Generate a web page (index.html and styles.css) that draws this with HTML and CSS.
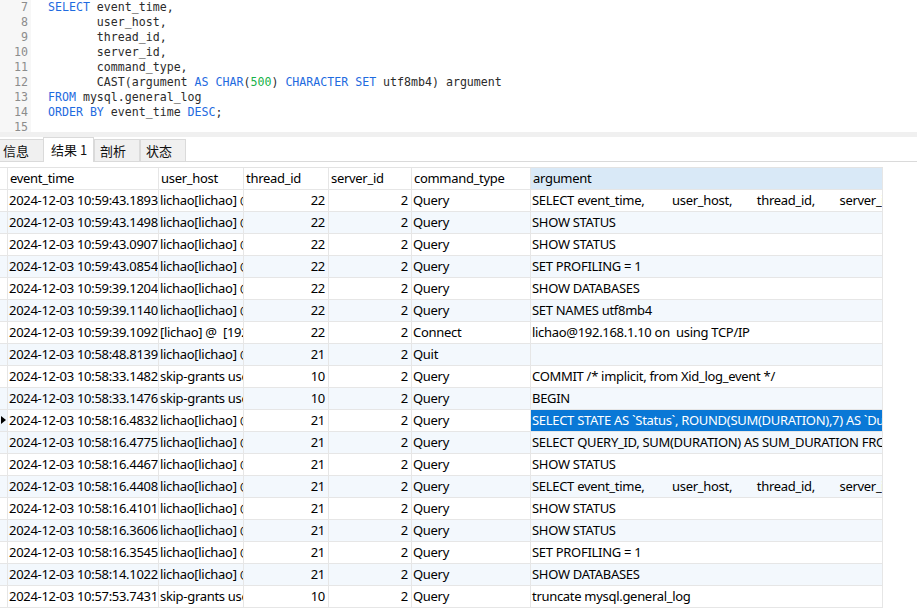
FILE: index.html
```html
<!DOCTYPE html>
<html>
<head>
<meta charset="utf-8">
<link rel="stylesheet" href="styles.css">
</head>
<body>
<div class="editor">
  <div class="gutter">
    <div>7</div><div>8</div><div>9</div><div>10</div><div>11</div><div>12</div><div>13</div><div>14</div><div>15</div>
  </div>
<pre class="code"><span class="kw">SELECT</span> event_time,
       user_host,
       thread_id,
       server_id,
       command_type,
       CAST(argument <span class="kw">AS</span> <span class="kw">CHAR</span>(<span class="num">500</span>) <span class="kw">CHARACTER SET</span> utf8mb4) argument
<span class="kw">FROM</span> mysql.general_log
<span class="kw">ORDER BY</span> event_time <span class="kw">DESC</span>;
</pre>
</div>
<div class="sep"></div>
<div class="tabs">
  <div class="tab first">信息</div>
  <div class="tab active">结果 1</div>
  <div class="tab">剖析</div>
  <div class="tab">状态</div>
</div>
<div class="grid-area">
  <div class="grid">
    <div class="c h ind"></div><div class="c h">event_time</div><div class="c h">user_host</div><div class="c h">thread_id</div><div class="c h">server_id</div><div class="c h">command_type</div><div class="c h sel-col">argument</div>

    <div class="c ind"></div><div class="c">2024-12-03 10:59:43.1893</div><div class="c">lichao[lichao] @ [192.168.1.10]</div><div class="c r">22</div><div class="c r">2</div><div class="c">Query</div><div class="c">SELECT event_time,         user_host,        thread_id,        server_id,</div>

    <div class="c ind alt"></div><div class="c alt">2024-12-03 10:59:43.1498</div><div class="c alt">lichao[lichao] @ [192.168.1.10]</div><div class="c r alt">22</div><div class="c r alt">2</div><div class="c alt">Query</div><div class="c alt">SHOW STATUS</div>

    <div class="c ind"></div><div class="c">2024-12-03 10:59:43.0907</div><div class="c">lichao[lichao] @ [192.168.1.10]</div><div class="c r">22</div><div class="c r">2</div><div class="c">Query</div><div class="c">SHOW STATUS</div>

    <div class="c ind alt"></div><div class="c alt">2024-12-03 10:59:43.0854</div><div class="c alt">lichao[lichao] @ [192.168.1.10]</div><div class="c r alt">22</div><div class="c r alt">2</div><div class="c alt">Query</div><div class="c alt">SET PROFILING = 1</div>

    <div class="c ind"></div><div class="c">2024-12-03 10:59:39.1204</div><div class="c">lichao[lichao] @ [192.168.1.10]</div><div class="c r">22</div><div class="c r">2</div><div class="c">Query</div><div class="c">SHOW DATABASES</div>

    <div class="c ind alt"></div><div class="c alt">2024-12-03 10:59:39.1140</div><div class="c alt">lichao[lichao] @ [192.168.1.10]</div><div class="c r alt">22</div><div class="c r alt">2</div><div class="c alt">Query</div><div class="c alt">SET NAMES utf8mb4</div>

    <div class="c ind"></div><div class="c">2024-12-03 10:59:39.1092</div><div class="c">[lichao] @  [192.168.1.10]</div><div class="c r">22</div><div class="c r">2</div><div class="c">Connect</div><div class="c">lichao@192.168.1.10 on  using TCP/IP</div>

    <div class="c ind alt"></div><div class="c alt">2024-12-03 10:58:48.8139</div><div class="c alt">lichao[lichao] @ [192.168.1.10]</div><div class="c r alt">21</div><div class="c r alt">2</div><div class="c alt">Quit</div><div class="c alt"></div>

    <div class="c ind"></div><div class="c">2024-12-03 10:58:33.1482</div><div class="c">skip-grants user[root] @ localhost []</div><div class="c r">10</div><div class="c r">2</div><div class="c">Query</div><div class="c">COMMIT /* implicit, from Xid_log_event */</div>

    <div class="c ind alt"></div><div class="c alt">2024-12-03 10:58:33.1476</div><div class="c alt">skip-grants user[root] @ localhost []</div><div class="c r alt">10</div><div class="c r alt">2</div><div class="c alt">Query</div><div class="c alt">BEGIN</div>

    <div class="c ind cur"><span class="arrow"></span></div><div class="c">2024-12-03 10:58:16.4832</div><div class="c">lichao[lichao] @ [192.168.1.10]</div><div class="c r">21</div><div class="c r">2</div><div class="c">Query</div><div class="c selected">SELECT STATE AS `Status`, ROUND(SUM(DURATION),7) AS `Duration`</div>

    <div class="c ind alt"></div><div class="c alt">2024-12-03 10:58:16.4775</div><div class="c alt">lichao[lichao] @ [192.168.1.10]</div><div class="c r alt">21</div><div class="c r alt">2</div><div class="c alt">Query</div><div class="c alt">SELECT QUERY_ID, SUM(DURATION) AS SUM_DURATION FROM</div>

    <div class="c ind"></div><div class="c">2024-12-03 10:58:16.4467</div><div class="c">lichao[lichao] @ [192.168.1.10]</div><div class="c r">21</div><div class="c r">2</div><div class="c">Query</div><div class="c">SHOW STATUS</div>

    <div class="c ind alt"></div><div class="c alt">2024-12-03 10:58:16.4408</div><div class="c alt">lichao[lichao] @ [192.168.1.10]</div><div class="c r alt">21</div><div class="c r alt">2</div><div class="c alt">Query</div><div class="c alt">SELECT event_time,         user_host,        thread_id,        server_id,</div>

    <div class="c ind"></div><div class="c">2024-12-03 10:58:16.4101</div><div class="c">lichao[lichao] @ [192.168.1.10]</div><div class="c r">21</div><div class="c r">2</div><div class="c">Query</div><div class="c">SHOW STATUS</div>

    <div class="c ind alt"></div><div class="c alt">2024-12-03 10:58:16.3606</div><div class="c alt">lichao[lichao] @ [192.168.1.10]</div><div class="c r alt">21</div><div class="c r alt">2</div><div class="c alt">Query</div><div class="c alt">SHOW STATUS</div>

    <div class="c ind"></div><div class="c">2024-12-03 10:58:16.3545</div><div class="c">lichao[lichao] @ [192.168.1.10]</div><div class="c r">21</div><div class="c r">2</div><div class="c">Query</div><div class="c">SET PROFILING = 1</div>

    <div class="c ind alt"></div><div class="c alt">2024-12-03 10:58:14.1022</div><div class="c alt">lichao[lichao] @ [192.168.1.10]</div><div class="c r alt">21</div><div class="c r alt">2</div><div class="c alt">Query</div><div class="c alt">SHOW DATABASES</div>

    <div class="c ind"></div><div class="c">2024-12-03 10:57:53.7431</div><div class="c">skip-grants user[root] @ localhost []</div><div class="c r">10</div><div class="c r">2</div><div class="c">Query</div><div class="c">truncate mysql.general_log</div>
  </div>
</div>
</body>
</html>
```
FILE: styles.css
```css
* { box-sizing: border-box; }
html, body { margin: 0; padding: 0; background: #fff; }
body {
  width: 917px;
  height: 616px;
  overflow: hidden;
  font-family: "Noto Sans", "Noto Sans CJK SC", sans-serif;
}
.editor {
  display: flex;
  height: 132px;
  overflow: hidden;
  background: #fff;
}
.gutter {
  width: 31px;
  background: #f7f7f7;
  color: #8c8c8c;
  font-family: "DejaVu Sans Mono", monospace;
  font-size: 11.6px;
  line-height: 15px;
  text-align: right;
  padding-right: 3px;
  flex: none;
}
.code {
  margin: 0 0 0 17px;
  font-family: "DejaVu Sans Mono", monospace;
  font-size: 11.6px;
  line-height: 15px;
  color: #2b2b2b;
}
.kw { color: #1f6be0; }
.num { color: #16b24a; }
.sep {
  height: 5px;
  background: #f0f0f0;
}
.tabs {
  height: 25px;
  display: flex;
  align-items: flex-end;
  border-bottom: 1px solid #dadada;
  font-family: "Noto Sans CJK SC", sans-serif;
  font-size: 13px;
  color: #111;
}
.tab {
  height: 22px;
  width: 46px;
  padding-left: 5px;
  line-height: 21px;
  background: #f0f0f0;
  border: 1px solid #dadada;
  border-bottom: none;
}
.tab.first {
  width: 43px;
  padding-left: 3px;
  border-left: none;
  border-right: none;
}
.tab.active {
  width: 51px;
  height: 25px;
  line-height: 24px;
  padding-left: 7px;
  background: #fff;
  margin-bottom: -1px;
}
.grid-area {
  padding-top: 5px;
}
.grid {
  display: grid;
  grid-template-columns: 8px 151px 85px 85px 83px 119px 352px;
  grid-auto-rows: 22px;
  width: 883px;
  border-top: 1px solid #e3e3e3;
  font-size: 13px;
  letter-spacing: -0.3px;
  color: #000;
}
.c {
  border-right: 1px solid #e6e6e6;
  border-bottom: 1px solid #e6e6e6;
  padding: 0 3px 0 1px;
  line-height: 21px;
  white-space: pre;
  overflow: hidden;
  background: #fff;
}
.c.alt { background: #f3f8fd; }
.c.r { text-align: right; }
.c.h { background: #fff; padding-left: 2px; }
.c.sel-col { background: #d9e9f7; }
.c.ind { padding: 0; position: relative; }
.c.cur { background: #eef4fa; }
.c.selected { background: #0a78d6; color: #fff; }
.arrow {
  position: absolute;
  left: 1px;
  top: 6px;
  width: 0;
  height: 0;
  border-left: 5px solid #000;
  border-top: 4px solid transparent;
  border-bottom: 4px solid transparent;
}
```
